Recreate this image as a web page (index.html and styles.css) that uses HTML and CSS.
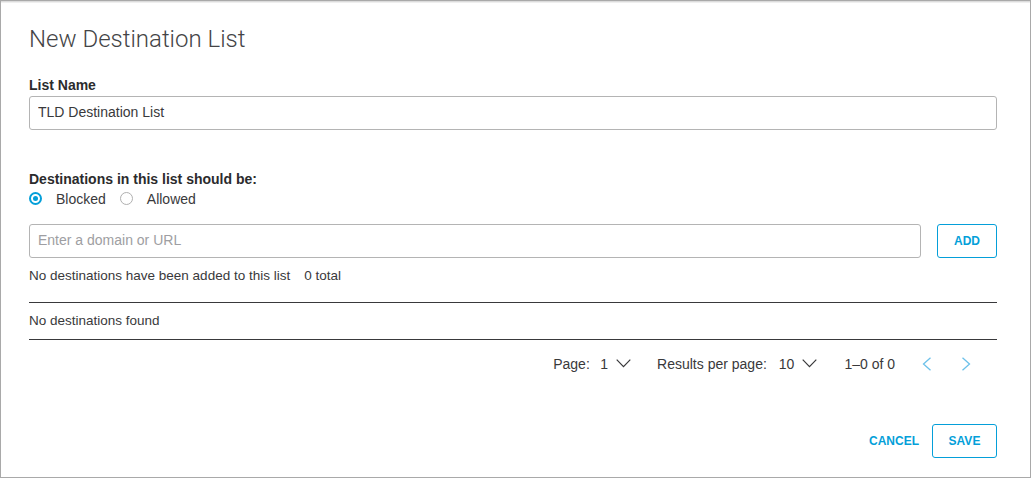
FILE: index.html
```html
<!DOCTYPE html>
<html lang="en">
<head>
<meta charset="utf-8">
<title>New Destination List</title>
<link rel="stylesheet" href="styles.css">
</head>
<body>
<div class="dialog">
  <h1 class="title">New Destination List</h1>

  <label class="field-label" for="listName">List Name</label>
  <input id="listName" class="text-input" type="text" value="TLD Destination List">

  <div class="field-label group-label">Destinations in this list should be:</div>
  <div class="radio-row">
    <label class="radio">
      <span class="radio-dot checked"></span>
      <span class="radio-text">Blocked</span>
    </label>
    <label class="radio">
      <span class="radio-dot"></span>
      <span class="radio-text">Allowed</span>
    </label>
  </div>

  <div class="add-row">
    <input class="text-input domain-input" type="text" placeholder="Enter a domain or URL">
    <button class="btn btn-outline">ADD</button>
  </div>

  <div class="summary">
    <span>No destinations have been added to this list</span>
    <span>0 total</span>
  </div>

  <div class="table">
    <div class="table-empty">No destinations found</div>
  </div>

  <div class="pager">
    <div class="pager-item">
      <span class="pager-label">Page:</span>
      <span class="pager-value page-num">1</span>
      <svg class="chev-down" width="15" height="9" viewBox="0 0 15 9"><polyline points="0.7,0.7 7.5,7.6 14.3,0.7" fill="none" stroke="#39393b" stroke-width="1.2"/></svg>
    </div>
    <div class="pager-item">
      <span class="pager-label">Results per page:</span>
      <span class="pager-value per-page">10</span>
      <svg class="chev-down" width="15" height="9" viewBox="0 0 15 9"><polyline points="0.7,0.7 7.5,7.6 14.3,0.7" fill="none" stroke="#39393b" stroke-width="1.2"/></svg>
    </div>
    <div class="pager-range">1–0 of 0</div>
    <div class="pager-nav">
      <svg width="10" height="14" viewBox="0 0 10 14"><polyline points="8.5,0.7 1.5,7 8.5,13.3" fill="none" stroke="#6cc1ea" stroke-width="1.3"/></svg>
      <svg width="10" height="14" viewBox="0 0 10 14"><polyline points="1.5,0.7 8.5,7 1.5,13.3" fill="none" stroke="#6cc1ea" stroke-width="1.3"/></svg>
    </div>
  </div>

  <div class="footer">
    <button class="btn btn-link">CANCEL</button>
    <button class="btn btn-outline btn-save">SAVE</button>
  </div>
</div>
</body>
</html>
```

FILE: styles.css
```css
* { box-sizing: border-box; }

html, body {
  margin: 0;
  padding: 0;
  background: #ffffff;
}

body {
  font-family: "Liberation Sans", Arial, sans-serif;
  color: #39393b;
  font-size: 14px;
}

.dialog {
  width: 1031px;
  height: 478px;
  border: 1px solid #a9a9a9;
  box-shadow: inset 0 1px 0 #dcdcdc, inset 0 2px 0 #efefef;
  padding: 24px 33px 0 28px;
  display: flex;
  flex-direction: column;
  align-items: stretch;
}

.title {
  margin: 0;
  font-family: Roboto, "Liberation Sans", sans-serif;
  font-weight: 300;
  font-size: 24px;
  line-height: 28px;
  color: #444446;
}

.field-label {
  display: block;
  margin-top: 24px;
  margin-bottom: 3px;
  font-weight: bold;
  font-size: 14px;
  line-height: 16px;
  color: #2b2b2d;
}

.group-label {
  margin-top: 41px;
  margin-bottom: 0;
}

.text-input {
  display: block;
  width: 100%;
  height: 34px;
  margin: 0;
  padding: 0 8px 3px;
  border: 1px solid #b4b4b4;
  border-radius: 3px;
  font-family: "Liberation Sans", Arial, sans-serif;
  font-size: 14px;
  color: #39393b;
  background: #fff;
  outline: none;
}

.text-input::placeholder {
  color: #9e9ea2;
}

.radio-row {
  margin-top: 3px;
  height: 18px;
  display: flex;
  align-items: center;
  gap: 14px;
}

.radio {
  display: flex;
  align-items: center;
  gap: 14px;
  line-height: 18px;
  font-size: 14px;
  color: #39393b;
}

.radio-dot {
  width: 13px;
  height: 13px;
  border-radius: 50%;
  border: 1px solid #b0b0b0;
  background: #fff;
  margin-top: -2px;
  position: relative;
}

.radio-dot.checked {
  border: 2px solid #049fd9;
}

.radio-dot.checked::after {
  content: "";
  position: absolute;
  left: 2px;
  top: 2px;
  width: 5px;
  height: 5px;
  border-radius: 50%;
  background: #049fd9;
}

.add-row {
  margin-top: 16px;
  display: flex;
  gap: 16px;
}

.domain-input {
  flex: 1;
}

.btn {
  font-family: "Liberation Sans", Arial, sans-serif;
  font-weight: bold;
  font-size: 12px;
  color: #049fd9;
  background: #fff;
  cursor: pointer;
  margin: 0;
}

.btn-outline {
  height: 34px;
  padding: 0 16px;
  border: 1px solid #049fd9;
  border-radius: 3px;
}

.btn-save {
  padding: 0 15px;
  width: 65px;
}

.btn-link {
  border: none;
  padding: 0;
  height: 34px;
}

.summary {
  margin-top: 10px;
  font-size: 13.5px;
  line-height: 16px;
  display: flex;
  gap: 14px;
  color: #39393b;
}

.table {
  margin-top: 18px;
  border-top: 1px solid #39393b;
  border-bottom: 1px solid #39393b;
  padding: 10px 0;
}

.table-empty {
  font-size: 13.5px;
  line-height: 16px;
}

.pager {
  margin-top: 16px;
  height: 16px;
  display: flex;
  justify-content: flex-end;
  align-items: center;
  padding-right: 26px;
  font-size: 14px;
  line-height: 16px;
}

.pager-item {
  display: flex;
  align-items: center;
}

.pager-item + .pager-item {
  margin-left: 26px;
}

.page-num {
  margin-left: 10.5px;
}

.per-page {
  margin-left: 12px;
}

.chev-down {
  margin-left: 8px;
  margin-top: -2px;
}

.pager-range {
  margin-left: 27px;
}

.pager-nav {
  margin-left: 27px;
  display: flex;
  gap: 29px;
  align-items: center;
}

.footer {
  margin-top: 52px;
  display: flex;
  justify-content: flex-end;
  align-items: center;
  gap: 13px;
}
```
